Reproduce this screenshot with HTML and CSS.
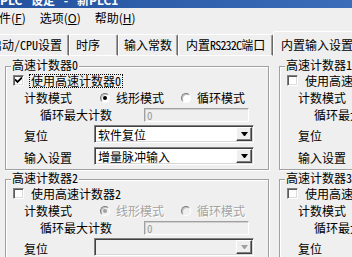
FILE: index.html
```html
<!DOCTYPE html>
<html lang="zh-CN">
<head>
<meta charset="utf-8">
<title>PLC 设定 - 新PLC1</title>
<link rel="stylesheet" href="styles.css">
</head>
<body>
<div class="titlebar"><span class="title-text">PLC 设定 - 新PLC1</span></div>
<div class="menubar">
  <span class="menu-item">文件(<u>F</u>)</span>
  <span class="menu-item">选项(<u>O</u>)</span>
  <span class="menu-item">帮助(<u>H</u>)</span>
</div>
<div class="tabstrip">
  <div class="tab tab-1">启动/CPU设置</div>
  <div class="tab tab-2">时序</div>
  <div class="tab tab-3">输入常数</div>
  <div class="tab tab-4">内置<span class="tight">RS232C</span>端口</div>
  <div class="tab tab-active">内置输入设置</div>
</div>
<div class="pane">
  <fieldset class="group">
    <legend>高速计数器0</legend>
    <div class="row row-check">
      <span class="check"><svg width="7" height="7" viewBox="0 0 7 7"><path d="M0 2.5 L2.5 5 L7 0.5" fill="none" stroke="#000" stroke-width="1.8"/></svg></span>
      <span class="check-label focus">使用高速计数器0</span>
    </div>
    <div class="row row-mode">
      <span class="lbl lbl-mode">计数模式</span>
      <span class="radio on"></span><span class="radio-label">线形模式</span>
      <span class="radio second"></span><span class="radio-label">循环模式</span>
    </div>
    <div class="row row-max">
      <span class="lbl lbl-max">循环最大计数</span>
      <span class="edit">0</span>
    </div>
    <div class="row row-combo">
      <span class="lbl lbl-combo">复位</span>
      <span class="combo"><span class="combo-text">软件复位</span><span class="drop"></span></span>
    </div>
    <div class="row row-combo row-combo2">
      <span class="lbl lbl-combo">输入设置</span>
      <span class="combo"><span class="combo-text">增量脉冲输入</span><span class="drop"></span></span>
    </div>
  </fieldset>

  <fieldset class="group">
    <legend>高速计数器1</legend>
    <div class="row row-check">
      <span class="check"></span>
      <span class="check-label">使用高速计数器1</span>
    </div>
    <div class="row row-mode">
      <span class="lbl lbl-mode">计数模式</span>
      <span class="radio on disabled"></span><span class="radio-label dis">线形模式</span>
      <span class="radio second disabled"></span><span class="radio-label dis">循环模式</span>
    </div>
    <div class="row row-max">
      <span class="lbl lbl-max">循环最大计数</span>
      <span class="edit">0</span>
    </div>
    <div class="row row-combo">
      <span class="lbl lbl-combo">复位</span>
      <span class="combo disabled"><span class="combo-text"></span><span class="drop"></span></span>
    </div>
    <div class="row row-combo row-combo2">
      <span class="lbl lbl-combo">输入设置</span>
      <span class="combo disabled"><span class="combo-text"></span><span class="drop"></span></span>
    </div>
  </fieldset>

  <fieldset class="group">
    <legend>高速计数器2</legend>
    <div class="row row-check">
      <span class="check"></span>
      <span class="check-label">使用高速计数器2</span>
    </div>
    <div class="row row-mode">
      <span class="lbl lbl-mode">计数模式</span>
      <span class="radio on disabled"></span><span class="radio-label dis">线形模式</span>
      <span class="radio second disabled"></span><span class="radio-label dis">循环模式</span>
    </div>
    <div class="row row-max">
      <span class="lbl lbl-max">循环最大计数</span>
      <span class="edit">0</span>
    </div>
    <div class="row row-combo">
      <span class="lbl lbl-combo">复位</span>
      <span class="combo disabled"><span class="combo-text"></span><span class="drop"></span></span>
    </div>
    <div class="row row-combo row-combo2">
      <span class="lbl lbl-combo">输入设置</span>
      <span class="combo disabled"><span class="combo-text"></span><span class="drop"></span></span>
    </div>
  </fieldset>

  <fieldset class="group">
    <legend>高速计数器3</legend>
    <div class="row row-check">
      <span class="check"></span>
      <span class="check-label">使用高速计数器3</span>
    </div>
    <div class="row row-mode">
      <span class="lbl lbl-mode">计数模式</span>
      <span class="radio on disabled"></span><span class="radio-label dis">线形模式</span>
      <span class="radio second disabled"></span><span class="radio-label dis">循环模式</span>
    </div>
    <div class="row row-max">
      <span class="lbl lbl-max">循环最大计数</span>
      <span class="edit">0</span>
    </div>
    <div class="row row-combo">
      <span class="lbl lbl-combo">复位</span>
      <span class="combo disabled"><span class="combo-text"></span><span class="drop"></span></span>
    </div>
    <div class="row row-combo row-combo2">
      <span class="lbl lbl-combo">输入设置</span>
      <span class="combo disabled"><span class="combo-text"></span><span class="drop"></span></span>
    </div>
  </fieldset>
</div>
</body>
</html>
```

FILE: styles.css
```css
* { box-sizing: border-box; }

html, body {
  margin: 0;
  padding: 0;
}

body {
  width: 352px;
  height: 257px;
  overflow: hidden;
  background: #efefef;
  font-family: "Noto Sans CJK SC", "Noto Sans", sans-serif;
  font-size: 12px;
  line-height: 14px;
  color: #000;
}

/* title bar (mostly cut off at the top) */
.titlebar {
  height: 8px;
  overflow: hidden;
  background: linear-gradient(to right, #24529e, #3b6db9);
  color: #fff;
  font-weight: bold;
  white-space: nowrap;
}
.title-text {
  display: block;
  margin-top: -6px;
  line-height: 12px;
  word-spacing: 6px;
}

/* menu bar */
.menubar {
  display: flex;
  height: 20px;
  line-height: 20px;
  margin-left: -20px;
  white-space: nowrap;
}
.menu-item {
  padding: 0 7px;
}
.menu-item u {
  text-decoration-thickness: 1px;
  text-underline-offset: 1px;
}

/* tabs */
.tabstrip {
  display: flex;
  align-items: flex-end;
  height: 25px;
  margin-top: 3px;
  margin-left: -18px;
  white-space: nowrap;
  font-feature-settings: "hwid" 1;
}
.tab {
  flex: none;
  height: 22px;
  padding: 3px 0 0 7px;
  border-top: 1px solid #fff;
  border-left: 1px solid #fff;
  border-right: 1px solid #696969;
  border-bottom: 1px solid #fff;
  box-shadow: inset -1px 0 #a0a0a0;
  border-top-left-radius: 2px;
  border-top-right-radius: 2px;
}
.tab-1 { width: 87px; }
.tab-2 { width: 49px; padding-left: 6px; }
.tab-3 { width: 60px; padding-left: 5px; }
.tab-4 { width: 95px; }
.tight { letter-spacing: -0.8px; }
.tab-active {
  width: 100px;
  height: 25px;
  padding-top: 6px;
  border-bottom: none;
}

/* tab page */
.pane {
  display: grid;
  grid-template-columns: 264px 264px;
  column-gap: 10px;
  row-gap: 1px;
  padding: 2px 0 0 5px;
  font-feature-settings: "hwid" 1;
  white-space: nowrap;
}

.group {
  margin: 0;
  padding: 0 0 4px;
  min-width: 0;
  border: 1px solid #a0a0a0;
  box-shadow: inset 1px 1px #fff, 1px 1px #fff;
}
.group legend {
  margin-left: 5px;
  padding: 0 1px 2px;
  line-height: 14px;
  background: #efefef;
}

.row {
  display: flex;
  align-items: center;
}
.row-check {
  height: 13px;
  padding-left: 7px;
}
.row-mode {
  height: 14px;
  margin-top: 4px;
  padding-left: 18px;
}
.row-max {
  height: 14px;
  margin-top: 3px;
  padding-left: 34px;
}
.row-combo {
  height: 18px;
  margin-top: 3px;
  padding-left: 18px;
}
.row-combo2 {
  margin-top: 4px;
}

.lbl { flex: none; }
.lbl-mode { width: 76px; }
.lbl-max { width: 104px; }
.lbl-combo { width: 70px; padding-top: 3px; }

/* checkbox */
.check {
  flex: none;
  display: flex;
  align-items: center;
  justify-content: center;
  width: 11px;
  height: 11px;
  background: #fff;
  border: 1px solid;
  border-color: #808080 #fff #fff #808080;
  box-shadow: inset 1px 1px #5a5a5a, inset -1px -1px #dcdcdc;
}
.check-label {
  margin-left: 5px;
  padding: 0 1px;
  line-height: 12px;
  border: 1px solid transparent;
}
.check-label.focus {
  border: 1px dotted #000;
}

/* radio buttons */
.radio {
  flex: none;
  display: flex;
  align-items: center;
  justify-content: center;
  width: 10px;
  height: 10px;
  border-radius: 50%;
  border: 1px solid;
  border-color: #7e7e7e #fff #fff #7e7e7e;
  box-shadow: inset 1px 1px #bdbdbd;
  background: #fff;
}
.radio.on::after {
  content: "";
  width: 4px;
  height: 4px;
  border-radius: 50%;
  background: #000;
}
.radio.second {
  margin-left: 17px;
}
.radio.disabled {
  background: #efefef;
}
.radio.disabled.on::after {
  background: #a0a0a0;
}
.radio-label {
  margin-left: 6px;
}
.dis {
  color: #a3a3a3;
  text-shadow: 1px 1px 0 #fff;
}

/* disabled edit */
.edit {
  flex: none;
  width: 105px;
  height: 14px;
  padding-left: 2px;
  border: 1px solid;
  border-color: #a0a0a0 #fff #fff #a0a0a0;
  box-shadow: inset 1px 1px #d0d0d0;
  background: #efefef;
  color: #9a9a9a;
  font-size: 11px;
  line-height: 12px;
}

/* combo boxes */
.combo {
  flex: none;
  display: flex;
  width: 160px;
  height: 18px;
  padding: 1px;
  border: 1px solid;
  border-color: #808080 #fff #fff #808080;
  box-shadow: inset 1px 1px #404040, inset -1px -1px #d8d8d8;
  background: #fff;
}
.combo-text {
  flex: 1;
  padding-left: 2px;
  line-height: 15px;
}
.drop {
  flex: none;
  display: flex;
  align-items: center;
  justify-content: center;
  width: 16px;
  height: 14px;
  background: #efefef;
  border: 1px solid;
  border-color: #fff #404040 #404040 #fff;
  box-shadow: inset -1px -1px #808080;
}
.drop::after {
  content: "";
  width: 1px;
  height: 0;
  border-left: 3px solid transparent;
  border-right: 3px solid transparent;
  border-top: 4px solid #000;
}
.combo.disabled {
  background: #efefef;
}
.combo.disabled .drop::after {
  border-top-color: #a0a0a0;
}
```
